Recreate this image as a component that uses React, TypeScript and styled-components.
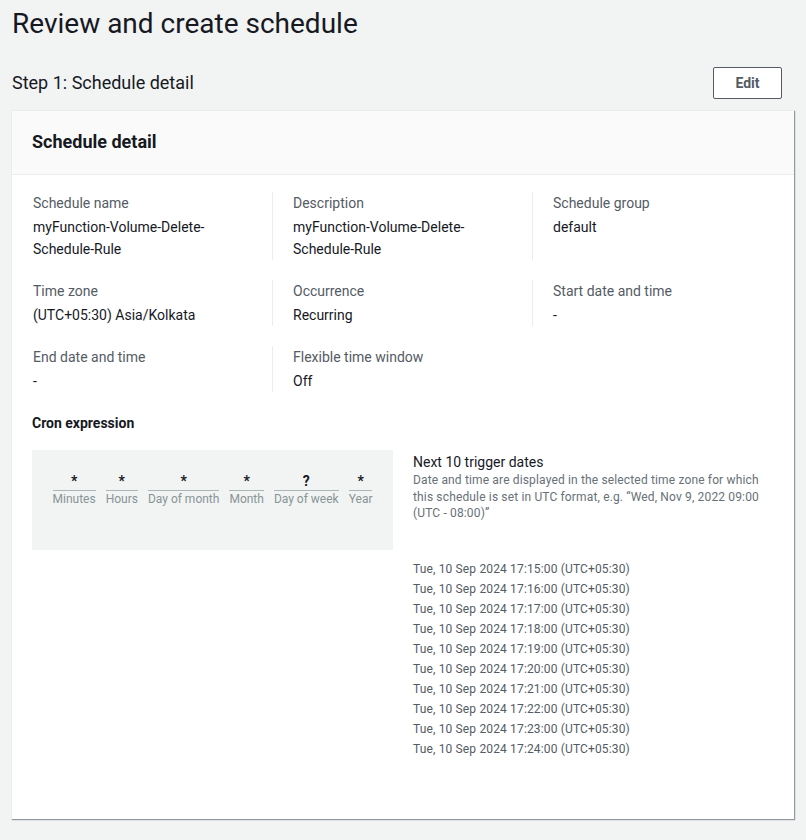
import React from "react";
import styled, { createGlobalStyle } from "styled-components";

const Global = createGlobalStyle`
  html, body { margin: 0; padding: 0; background: #f2f3f3; }
  body { font-family: Roboto, "Noto Sans", "Liberation Sans", sans-serif; color: #16191f; }
  * { box-sizing: border-box; }
`;

const Page = styled.div`
  padding: 6px 12px 20px 12px;
  width: 806px;
`;

const Title = styled.h1`
  margin: 0;
  font-size: 28px;
  line-height: 36px;
  font-weight: 400;
  color: #16191f;
`;

const StepBar = styled.div`
  display: flex;
  align-items: center;
  justify-content: space-between;
  margin-top: 25px;
  padding-right: 12px;
`;

const StepTitle = styled.h2`
  margin: 0;
  font-size: 18px;
  line-height: 24px;
  font-weight: 400;
`;

const Button = styled.button`
  font-family: inherit;
  background: #fff;
  border: 1px solid #545b64;
  border-radius: 2px;
  color: #545b64;
  font-weight: 700;
  font-size: 14px;
  height: 32px;
  width: 69px;
  padding: 0;
`;

const Card = styled.section`
  margin-top: 11px;
  margin-left: -1px;
  width: 783px;
  background: #fff;
  border-left: 1px solid #eaeded;
  border-top: 1px solid #eaeded;
  box-shadow: 1px 1px 1px 0 rgba(0, 28, 36, 0.3), 1px 1px 1px 0 rgba(0, 28, 36, 0.15);
`;

const CardHeader = styled.div`
  background: #fafafa;
  border-bottom: 1px solid #eaeded;
  height: 64px;
  display: flex;
  align-items: center;
  padding: 0 20px 1px 20px;
`;

const CardTitle = styled.h3`
  margin: 0;
  font-size: 18px;
  font-weight: 700;
  line-height: 22px;
`;

const CardBody = styled.div`
  padding: 17px 0 60px 0;
`;

const Grid = styled.div`
  display: grid;
  grid-template-columns: repeat(3, 260px);
  row-gap: 20px;
`;

const Cell = styled.div<{ $divider?: boolean }>`
  padding: 0 20px;
  border-left: 1px solid ${(p) => (p.$divider ? "#eaeded" : "transparent")};
`;

const Label = styled.div`
  font-size: 14px;
  line-height: 22px;
  color: #545b64;
  margin-bottom: 2px;
`;

const Value = styled.div`
  font-size: 14px;
  line-height: 22px;
  color: #16191f;
`;

const CronSection = styled.div`
  padding: 20px 20px 0 20px;
`;

const CronHeading = styled.div`
  font-size: 14px;
  font-weight: 700;
  line-height: 22px;
`;

const CronRow = styled.div`
  display: grid;
  grid-template-columns: 361px 361px;
  column-gap: 20px;
  margin-top: 16px;
`;

const CronBox = styled.div`
  background: #f2f3f3;
  height: 100px;
  display: flex;
  justify-content: center;
  align-items: flex-start;
  gap: 10px;
  padding-top: 22px;
`;

const CronField = styled.div`
  display: flex;
  flex-direction: column;
  align-items: stretch;
`;

const CronValue = styled.div`
  font-size: 14px;
  font-weight: 700;
  text-align: center;
  line-height: 18px;
  border-bottom: 1px solid #aab7b8;
`;

const CronLabel = styled.div`
  font-size: 12px;
  line-height: 16px;
  color: #879596;
  text-align: center;
`;

const TriggerCol = styled.div`
  padding-top: 2px;
`;

const TriggerTitle = styled.div`
  font-size: 14px;
  line-height: 20px;
`;

const TriggerDesc = styled.div`
  font-size: 12px;
  line-height: 16.5px;
  letter-spacing: 0.15px;
  color: #687078;
  margin-bottom: 37px;
`;

const DateItem = styled.div`
  font-size: 12px;
  line-height: 20px;
  letter-spacing: 0.15px;
  color: #545b64;
`;

const rows: { label: string; value: React.ReactNode }[][] = [
  [
    { label: "Schedule name", value: <>myFunction-Volume-Delete-<br />Schedule-Rule</> },
    { label: "Description", value: <>myFunction-Volume-Delete-<br />Schedule-Rule</> },
    { label: "Schedule group", value: "default" },
  ],
  [
    { label: "Time zone", value: "(UTC+05:30) Asia/Kolkata" },
    { label: "Occurrence", value: "Recurring" },
    { label: "Start date and time", value: "-" },
  ],
  [
    { label: "End date and time", value: "-" },
    { label: "Flexible time window", value: "Off" },
  ],
];

const cron = [
  { v: "*", l: "Minutes" },
  { v: "*", l: "Hours" },
  { v: "*", l: "Day of month" },
  { v: "*", l: "Month" },
  { v: "?", l: "Day of week" },
  { v: "*", l: "Year" },
];

const dates = Array.from({ length: 10 }, (_, i) => `Tue, 10 Sep 2024 17:${15 + i}:00 (UTC+05:30)`);

export default function App() {
  return (
    <Page>
      <Global />
      <Title>Review and create schedule</Title>
      <StepBar>
        <StepTitle>Step 1: Schedule detail</StepTitle>
        <Button>Edit</Button>
      </StepBar>
      <Card>
        <CardHeader>
          <CardTitle>Schedule detail</CardTitle>
        </CardHeader>
        <CardBody>
          <Grid>
            {rows.map((row, ri) =>
              row.map((c, ci) => (
                <Cell key={`${ri}-${ci}`} $divider={ci > 0}>
                  <Label>{c.label}</Label>
                  <Value>{c.value}</Value>
                </Cell>
              ))
            )}
          </Grid>
          <CronSection>
            <CronHeading>Cron expression</CronHeading>
            <CronRow>
              <CronBox>
                {cron.map((c) => (
                  <CronField key={c.l}>
                    <CronValue>{c.v}</CronValue>
                    <CronLabel>{c.l}</CronLabel>
                  </CronField>
                ))}
              </CronBox>
              <TriggerCol>
                <TriggerTitle>Next 10 trigger dates</TriggerTitle>
                <TriggerDesc>
                  Date and time are displayed in the selected time zone for which this schedule is set in UTC
                  format, e.g. “Wed, Nov 9, 2022 09:00 (UTC - 08:00)”
                </TriggerDesc>
                {dates.map((d) => (
                  <DateItem key={d}>{d}</DateItem>
                ))}
              </TriggerCol>
            </CronRow>
          </CronSection>
        </CardBody>
      </Card>
    </Page>
  );
}
